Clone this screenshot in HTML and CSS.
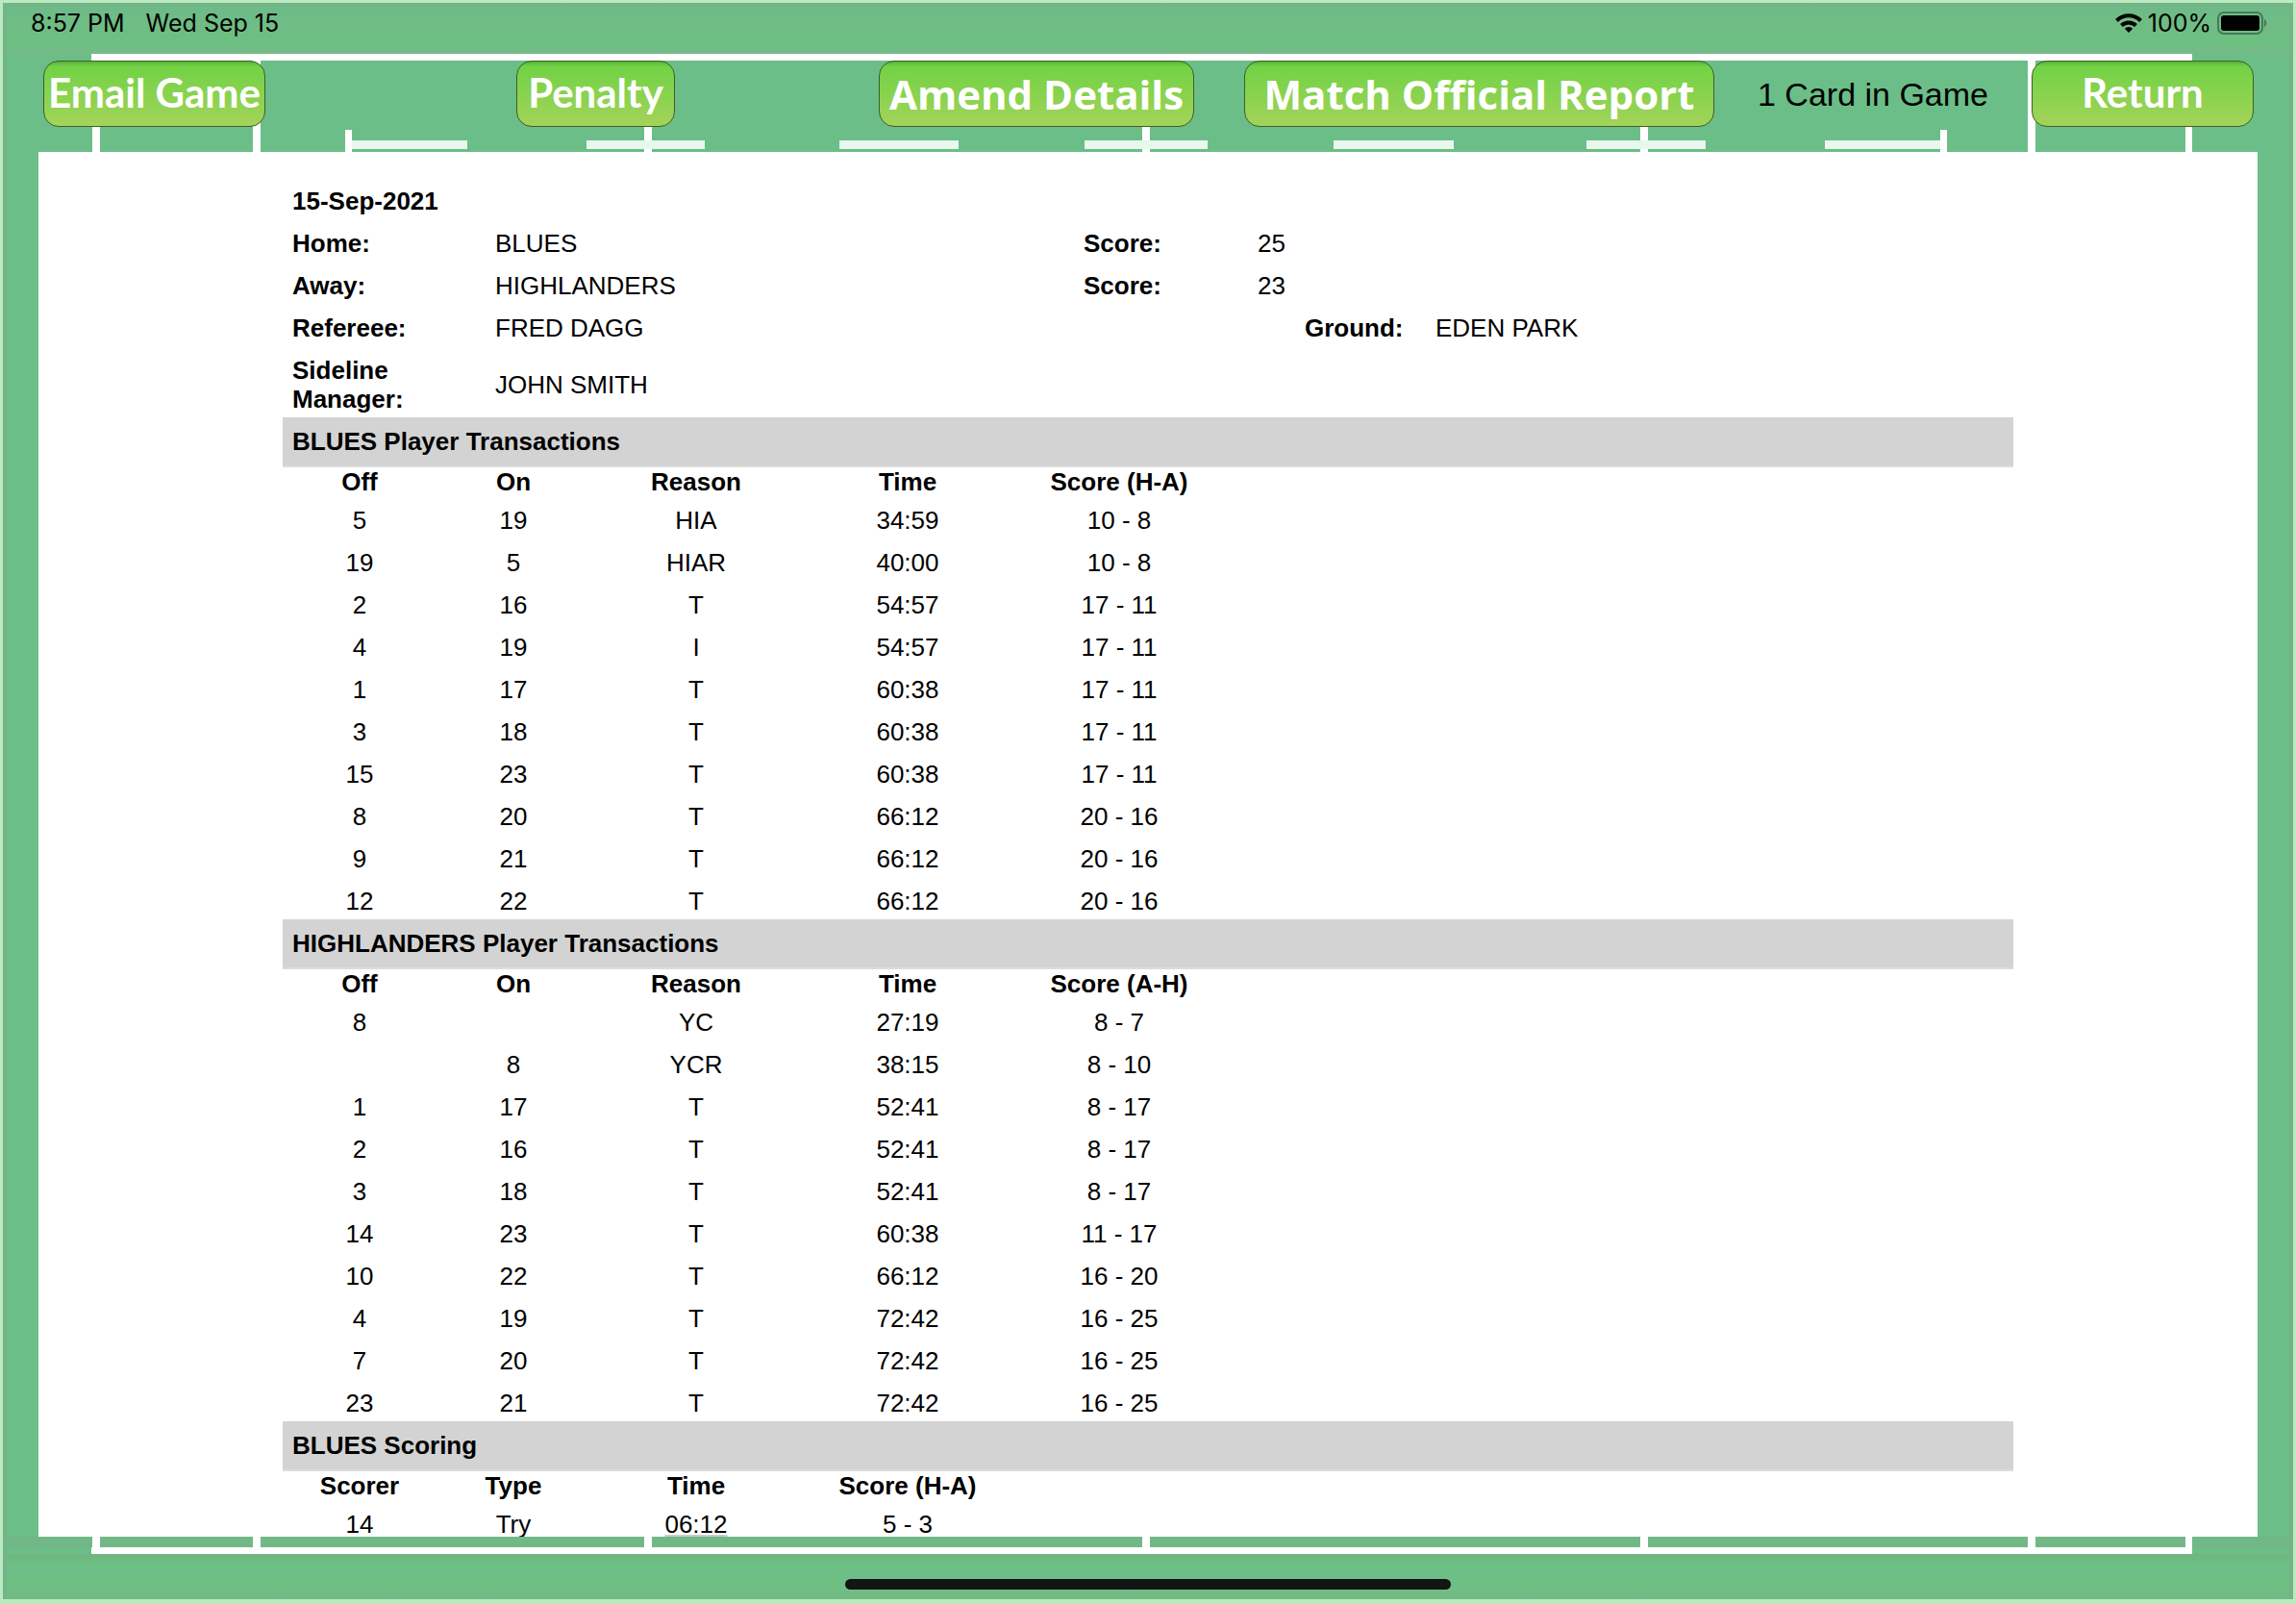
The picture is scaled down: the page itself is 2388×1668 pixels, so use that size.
FILE: index.html
```
<!DOCTYPE html>
<html lang="en">
<head>
<meta charset="utf-8">
<meta name="viewport" content="width=device-width, initial-scale=1">
<title>Game Report</title>
<link rel="stylesheet" href="styles.css">
</head>
<body>
<svg class="pitch" viewBox="0 0 2388 1668" preserveAspectRatio="none" aria-hidden="true">
  <defs>
    <linearGradient id="grass-top" x1="0" y1="0" x2="0" y2="1">
      <stop offset="0" stop-color="#6cbb88"/>
      <stop offset=".5" stop-color="#70bd84"/>
      <stop offset=".8" stop-color="#6cc180"/>
      <stop offset="1" stop-color="#77b88a"/>
    </linearGradient>
    <linearGradient id="grass-bottom" x1="0" y1="0" x2="0" y2="1">
      <stop offset="0" stop-color="#6fb67f"/>
      <stop offset=".25" stop-color="#6cc083"/>
      <stop offset=".4" stop-color="#6dbe8a"/>
      <stop offset=".6" stop-color="#6dc082"/>
      <stop offset="1" stop-color="#73ba85"/>
    </linearGradient>
  </defs>
  <rect width="2388" height="1668" fill="#bbe9c0"/>
  <rect x="5" y="5" width="2378" height="1658" fill="#6bbe87"/>
  <rect x="5" y="5" width="2378" height="50" fill="url(#grass-top)"/>
  <rect x="5" y="1598" width="2378" height="12" fill="#72b887"/>
  <rect x="5" y="1616" width="2378" height="47" fill="url(#grass-bottom)"/>
  <path d="M5 1663V5H2383V1663" fill="none" stroke="#74b487" stroke-width="4"/>
  <g fill="#fff">
    <rect x="95" y="56" width="2185" height="7"/>
    <rect x="95" y="1609" width="2185" height="7"/>
    <rect x="96" y="56" width="8" height="1560"/>
    <rect x="263" y="56" width="8" height="1560"/>
    <rect x="670" y="56" width="8" height="1560"/>
    <rect x="1188" y="56" width="8" height="1560"/>
    <rect x="1706" y="56" width="8" height="1560"/>
    <rect x="2109" y="56" width="8" height="1560"/>
    <rect x="2273" y="56" width="7" height="1560"/>
    <rect x="359" y="135" width="7" height="30"/>
    <rect x="2018" y="135" width="7" height="30"/>
  </g>
  <g fill="#e8f8ec">
    <rect x="366" y="146" width="120" height="9"/>
    <rect x="610" y="146" width="123" height="9"/>
    <rect x="873" y="146" width="124" height="9"/>
    <rect x="1128" y="146" width="128" height="9"/>
    <rect x="1387" y="146" width="125" height="9"/>
    <rect x="1650" y="146" width="124" height="9"/>
    <rect x="1898" y="146" width="120" height="9"/>
  </g>
</svg>

<div class="screen">
  <header class="status">
    <span>8:57 PM</span>
    <span>Wed Sep 15</span>
    <span class="status-right">
      <svg class="wifi" viewBox="0 0 28 20" aria-label="Wi-Fi">
        <g fill="none" stroke="#000" stroke-width="4">
          <path d="M1.500 7.500A17.500 17.500 0 0 1 26.500 7.500"/>
          <path d="M6.500 12.500A10.600 10.600 0 0 1 21.500 12.500"/>
        </g>
        <path d="M14 20L9.800 15.700A6 6 0 0 1 18.200 15.700Z"/>
      </svg>
      <span>100%</span>
      <svg class="battery" viewBox="0 0 52 24" aria-label="Battery full">
        <rect x="1" y="1" width="46" height="22" rx="6" fill="none" stroke="#457a57" stroke-width="2"/>
        <rect x="4" y="4" width="40" height="16" rx="3"/>
        <path d="M49 8C52 9 52 15 49 16Z" fill="#457a57"/>
      </svg>
    </span>
  </header>

  <nav class="toolbar">
    <button class="btn compact email" type="button">Email Game</button>
    <button class="btn compact penalty" type="button">Penalty</button>
    <button class="btn amend" type="button">Amend Details</button>
    <button class="btn official" type="button">Match Official Report</button>
    <span class="cards">1 Card in Game</span>
    <button class="btn compact return" type="button">Return</button>
  </nav>

  <main class="report">
    <div class="sheet">
      <table class="info">
        <colgroup><col class="c-label"><col class="c-name"><col class="c-score"><col class="c-points"><col class="c-ground"><col></colgroup>
        <tbody>
          <tr><th colspan="6">15-Sep-2021</th></tr>
          <tr><th>Home:</th><td>BLUES</td><th>Score:</th><td>25</td><td></td><td></td></tr>
          <tr><th>Away:</th><td>HIGHLANDERS</td><th>Score:</th><td>23</td><td></td><td></td></tr>
          <tr><th>Refereee:</th><td>FRED DAGG</td><td></td><td></td><th>Ground:</th><td>EDEN PARK</td></tr>
          <tr><th>Sideline Manager:</th><td>JOHN SMITH</td><td></td><td></td><td></td><td></td></tr>
        </tbody>
      </table>

      <h2 class="band">BLUES Player Transactions</h2>
      <table class="log">
        <colgroup><col class="c-who"><col class="c-who"><col class="c-event"><col class="c-event"><col class="c-event"><col></colgroup>
        <thead><tr><th>Off</th><th>On</th><th>Reason</th><th>Time</th><th>Score (H-A)</th><td></td></tr></thead>
        <tbody>
          <tr><td>5</td><td>19</td><td>HIA</td><td>34:59</td><td>10 - 8</td></tr>
          <tr><td>19</td><td>5</td><td>HIAR</td><td>40:00</td><td>10 - 8</td></tr>
          <tr><td>2</td><td>16</td><td>T</td><td>54:57</td><td>17 - 11</td></tr>
          <tr><td>4</td><td>19</td><td>I</td><td>54:57</td><td>17 - 11</td></tr>
          <tr><td>1</td><td>17</td><td>T</td><td>60:38</td><td>17 - 11</td></tr>
          <tr><td>3</td><td>18</td><td>T</td><td>60:38</td><td>17 - 11</td></tr>
          <tr><td>15</td><td>23</td><td>T</td><td>60:38</td><td>17 - 11</td></tr>
          <tr><td>8</td><td>20</td><td>T</td><td>66:12</td><td>20 - 16</td></tr>
          <tr><td>9</td><td>21</td><td>T</td><td>66:12</td><td>20 - 16</td></tr>
          <tr><td>12</td><td>22</td><td>T</td><td>66:12</td><td>20 - 16</td></tr>
        </tbody>
      </table>

      <h2 class="band">HIGHLANDERS Player Transactions</h2>
      <table class="log">
        <colgroup><col class="c-who"><col class="c-who"><col class="c-event"><col class="c-event"><col class="c-event"><col></colgroup>
        <thead><tr><th>Off</th><th>On</th><th>Reason</th><th>Time</th><th>Score (A-H)</th><td></td></tr></thead>
        <tbody>
          <tr><td>8</td><td></td><td>YC</td><td>27:19</td><td>8 - 7</td></tr>
          <tr><td></td><td>8</td><td>YCR</td><td>38:15</td><td>8 - 10</td></tr>
          <tr><td>1</td><td>17</td><td>T</td><td>52:41</td><td>8 - 17</td></tr>
          <tr><td>2</td><td>16</td><td>T</td><td>52:41</td><td>8 - 17</td></tr>
          <tr><td>3</td><td>18</td><td>T</td><td>52:41</td><td>8 - 17</td></tr>
          <tr><td>14</td><td>23</td><td>T</td><td>60:38</td><td>11 - 17</td></tr>
          <tr><td>10</td><td>22</td><td>T</td><td>66:12</td><td>16 - 20</td></tr>
          <tr><td>4</td><td>19</td><td>T</td><td>72:42</td><td>16 - 25</td></tr>
          <tr><td>7</td><td>20</td><td>T</td><td>72:42</td><td>16 - 25</td></tr>
          <tr><td>23</td><td>21</td><td>T</td><td>72:42</td><td>16 - 25</td></tr>
        </tbody>
      </table>

      <h2 class="band">BLUES Scoring</h2>
      <table class="log">
        <colgroup><col class="c-who"><col class="c-who"><col class="c-event"><col class="c-event"><col class="c-event"><col></colgroup>
        <thead><tr><th>Scorer</th><th>Type</th><th>Time</th><th>Score (H-A)</th><td></td><td></td></tr></thead>
        <tbody>
          <tr><td>14</td><td>Try</td><td><time class="detected">06:12</time></td><td>5 - 3</td></tr>
        </tbody>
      </table>
    </div>
  </main>

  <footer class="home"><div class="home-bar"></div></footer>
</div>
</body>
</html>
```
FILE: styles.css
```
* {
  box-sizing: border-box;
}

body {
  margin: 0;
  font-family: "Liberation Sans", Arial, Helvetica, sans-serif;
  color: #000;
  background: #6bbe87;
}

/* Playing field behind everything */
.pitch {
  position: absolute;
  inset: 0;
  width: 100%;
  height: 100%;
}

.screen {
  position: relative;
  height: 100vh;
  display: flex;
  flex-direction: column;
}

.status {
  flex: none;
  display: flex;
  align-items: center;
  gap: 22px;
  height: 47px;
  padding: 0 30px 0 32px;
  font: 25px/28px Inter, sans-serif;
}

.status-right {
  display: flex;
  align-items: center;
  gap: 6px;
  margin-left: auto;
}

.wifi {
  width: 28px;
  height: 20px;
}

.battery {
  width: 52px;
  height: 24px;
}

.toolbar {
  flex: none;
  display: grid;
  grid-template-columns: 231px 261fr 165px 212fr 328px 52fr 489px 330fr 231px;
  align-items: center;
  height: 111px;
  padding: 16px 44px 26px 45px;
}

.btn {
  height: 69px;
  padding: 0;
  border: 1px solid #3d5f2a;
  border-radius: 16px;
  background: linear-gradient(#5cb336, #72d246 8%, #9fd357 92%, #a3d458);
  color: #fff;
  font: bold 42px/52px "Open Sans", sans-serif;
  white-space: nowrap;
}

.compact {
  padding-bottom: 4px;
  font-family: Lato, sans-serif;
}

.email { grid-column: 1; }
.penalty { grid-column: 3; }
.amend { grid-column: 5; }
.official { grid-column: 7; }
.return { grid-column: 9; }

.cards {
  grid-column: 8;
  text-align: center;
  font-size: 34px;
  line-height: 40px;
}

.report {
  flex: 1;
  min-height: 0;
  margin: 0 40px;
  padding-top: 26px;
  overflow: hidden;
  background: #fff;
  font-size: 26px;
  line-height: 30px;
}

.sheet {
  max-width: 1800px;
  margin: 0 auto;
}

table {
  width: 100%;
  table-layout: fixed;
  border-collapse: collapse;
}

th,
td {
  height: 44px;
  padding: 10px 10px 4px;
  vertical-align: middle;
}

.info th {
  text-align: left;
}

.c-label { width: 211px; }
.c-name { width: 612px; }
.c-score { width: 181px; }
.c-points { width: 49px; }
.c-ground { width: 136px; }
.c-who { width: 160px; }
.c-event { width: 220px; }

.log {
  text-align: center;
}

.log thead th,
.log thead td {
  height: 30px;
  padding: 0;
}

.band {
  margin: 0;
  padding: 10px;
  border-bottom: 2px solid #dcdcdc;
  background: #d3d3d3;
  font-size: 26px;
  line-height: 30px;
}

.detected {
  text-decoration: underline 2px #ccc;
  text-underline-offset: 2px;
}

.home {
  flex: none;
  display: flex;
  justify-content: center;
  height: 70px;
  padding-top: 44px;
}

.home-bar {
  width: 630px;
  height: 11px;
  border-radius: 6px;
  background: #141414;
}
```
